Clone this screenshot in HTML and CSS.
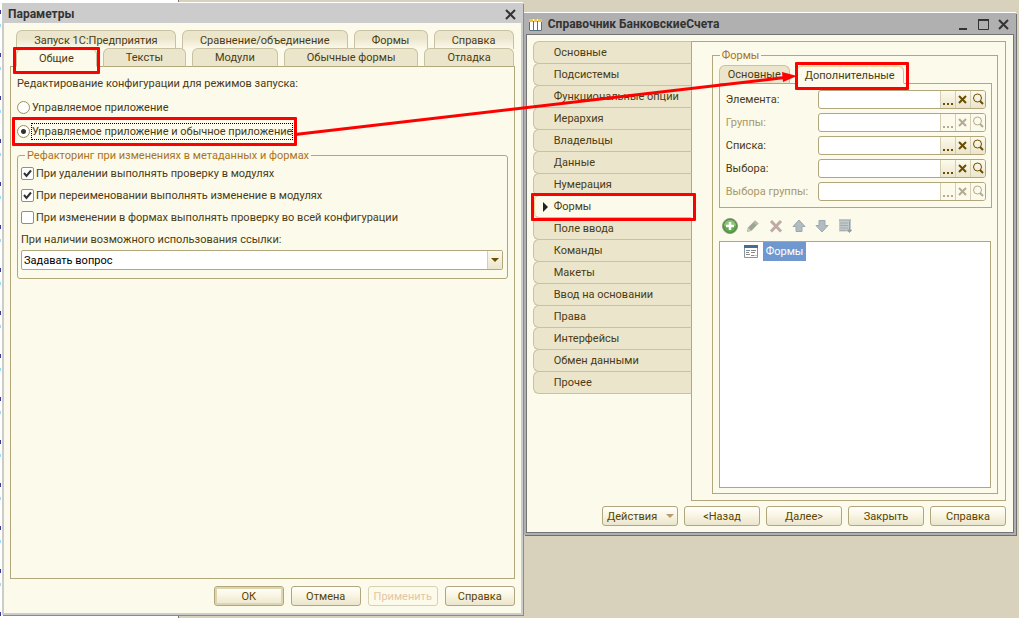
FILE: index.html
```html
<!DOCTYPE html>
<html lang="ru">
<head>
    <meta charset="UTF-8">
    <meta name="viewport" content="width=device-width, initial-scale=1.0">
    <title>Параметры</title>
    <link rel="stylesheet" href="styles.css">
</head>
<body>
    <div class="desktop">
        <div class="editor"></div>

        <section class="window window-params">
            <header class="titlebar">
                <h1>Параметры</h1>
                <button class="win-btn" type="button" aria-label="Закрыть">
                    <svg width="11" height="11" viewBox="0 0 11 11"><path d="M1 1l9 9M10 1l-9 9" stroke="#333" stroke-width="2"/></svg>
                </button>
            </header>
            <form class="window-body">
                <div class="tabs tabs-back" role="tablist">
                    <button type="button" role="tab">Запуск 1С:Предприятия</button>
                    <button type="button" role="tab">Сравнение/объединение</button>
                    <button type="button" role="tab">Формы</button>
                    <button type="button" role="tab">Справка</button>
                </div>
                <div class="tabs" role="tablist">
                    <button type="button" role="tab" class="active">Общие<span class="mark mark-tab"></span></button>
                    <button type="button" role="tab">Тексты</button>
                    <button type="button" role="tab">Модули</button>
                    <button type="button" role="tab">Обычные формы</button>
                    <button type="button" role="tab">Отладка</button>
                </div>
                <div class="panel params-panel">
                    <p>Редактирование конфигурации для режимов запуска:</p>
                    <label class="option"><input type="radio" name="mode"><span>Управляемое приложение</span></label>
                    <label class="option"><input type="radio" name="mode" checked><span class="focused">Управляемое приложение и обычное приложение</span><span class="mark mark-option"></span></label>
                    <fieldset class="refactoring">
                        <legend>Рефакторинг при изменениях в метаданных и формах</legend>
                        <label class="option"><input type="checkbox" checked><span>При удалении выполнять проверку в модулях</span></label>
                        <label class="option"><input type="checkbox" checked><span>При переименовании выполнять изменение в модулях</span></label>
                        <label class="option"><input type="checkbox"><span>При изменении в формах выполнять проверку во всей конфигурации</span></label>
                        <div class="combo-group">
                            <label for="links">При наличии возможного использования ссылки:</label>
                            <div class="combo">
                                <select id="links">
                                    <option>Задавать вопрос</option>
                                </select>
                                <span class="combo-arrow"></span>
                            </div>
                        </div>
                    </fieldset>
                </div>
                <footer class="buttons">
                    <button type="button" class="default">ОК</button>
                    <button type="button">Отмена</button>
                    <button type="button" disabled>Применить</button>
                    <button type="button">Справка</button>
                </footer>
            </form>
        </section>

        <section class="window window-catalog">
            <header class="titlebar">
                <svg width="13" height="12" viewBox="0 0 13 12">
                    <path fill="#fff" d="M0 0h13v12H0z"/>
                    <path fill="none" stroke="#55717f" d="M.5 2v9.500h12V2M4.500 2v9M8.500 2v9"/>
                    <path fill="#f0c63c" d="M0 0h4v3H0zM5 0h3v3H5zM9 0h4v3H9z"/>
                </svg>
                <h1>Справочник БанковскиеСчета</h1>
                <button class="win-btn" type="button" aria-label="Свернуть">
                    <svg width="11" height="11" viewBox="0 0 11 11"><path d="M1 10h8" stroke="#333" stroke-width="2"/></svg>
                </button>
                <button class="win-btn" type="button" aria-label="Развернуть">
                    <svg width="11" height="11" viewBox="0 0 11 11"><path d="M.5 1v9.500h10V1" fill="none" stroke="#333"/><path d="M0 1h11" stroke="#333" stroke-width="2"/></svg>
                </button>
                <button class="win-btn" type="button" aria-label="Закрыть">
                    <svg width="11" height="11" viewBox="0 0 11 11"><path d="M1 1l9 9M10 1l-9 9" stroke="#333" stroke-width="2"/></svg>
                </button>
            </header>
            <form class="window-body">
                <div class="catalog">
                    <nav class="side-tabs">
                        <button type="button">Основные</button>
                        <button type="button">Подсистемы</button>
                        <button type="button">Функциональные опции</button>
                        <button type="button">Иерархия</button>
                        <button type="button">Владельцы</button>
                        <button type="button">Данные</button>
                        <button type="button">Нумерация</button>
                        <button type="button" class="active">Формы<span class="mark mark-side"></span></button>
                        <button type="button">Поле ввода</button>
                        <button type="button">Команды</button>
                        <button type="button">Макеты</button>
                        <button type="button">Ввод на основании</button>
                        <button type="button">Права</button>
                        <button type="button">Интерфейсы</button>
                        <button type="button">Обмен данными</button>
                        <button type="button">Прочее</button>
                    </nav>
                    <div class="panel catalog-panel">
                        <fieldset class="forms">
                            <legend>Формы</legend>
                            <div class="tabs tabs-small" role="tablist">
                                <button type="button" role="tab">Основные</button>
                                <button type="button" role="tab" class="active">Дополнительные<span class="mark mark-extra"></span></button>
                            </div>
                            <div class="panel fields">
                                <div class="field">
                                    <label for="f-item">Элемента:</label>
                                    <div class="picker">
                                        <input type="text" id="f-item">
                                        <button type="button" aria-label="Выбрать"><svg width="14" height="17"><use href="#dots"/></svg></button>
                                        <button type="button" aria-label="Очистить"><svg width="14" height="17"><use href="#cross"/></svg></button>
                                        <button type="button" aria-label="Открыть"><svg width="14" height="17"><use href="#lens"/></svg></button>
                                    </div>
                                </div>
                                <div class="field off">
                                    <label for="f-group">Группы:</label>
                                    <div class="picker">
                                        <input type="text" id="f-group" disabled>
                                        <button type="button" disabled aria-label="Выбрать"><svg width="14" height="17"><use href="#dots"/></svg></button>
                                        <button type="button" disabled aria-label="Очистить"><svg width="14" height="17"><use href="#cross"/></svg></button>
                                        <button type="button" disabled aria-label="Открыть"><svg width="14" height="17"><use href="#lens"/></svg></button>
                                    </div>
                                </div>
                                <div class="field">
                                    <label for="f-list">Списка:</label>
                                    <div class="picker">
                                        <input type="text" id="f-list">
                                        <button type="button" aria-label="Выбрать"><svg width="14" height="17"><use href="#dots"/></svg></button>
                                        <button type="button" aria-label="Очистить"><svg width="14" height="17"><use href="#cross"/></svg></button>
                                        <button type="button" aria-label="Открыть"><svg width="14" height="17"><use href="#lens"/></svg></button>
                                    </div>
                                </div>
                                <div class="field">
                                    <label for="f-choice">Выбора:</label>
                                    <div class="picker">
                                        <input type="text" id="f-choice">
                                        <button type="button" aria-label="Выбрать"><svg width="14" height="17"><use href="#dots"/></svg></button>
                                        <button type="button" aria-label="Очистить"><svg width="14" height="17"><use href="#cross"/></svg></button>
                                        <button type="button" aria-label="Открыть"><svg width="14" height="17"><use href="#lens"/></svg></button>
                                    </div>
                                </div>
                                <div class="field off">
                                    <label for="f-choice-group">Выбора группы:</label>
                                    <div class="picker">
                                        <input type="text" id="f-choice-group" disabled>
                                        <button type="button" disabled aria-label="Выбрать"><svg width="14" height="17"><use href="#dots"/></svg></button>
                                        <button type="button" disabled aria-label="Очистить"><svg width="14" height="17"><use href="#cross"/></svg></button>
                                        <button type="button" disabled aria-label="Открыть"><svg width="14" height="17"><use href="#lens"/></svg></button>
                                    </div>
                                </div>
                            </div>
                            <div class="toolbar">
                                <button type="button" aria-label="Добавить">
                                    <svg width="16" height="16" viewBox="0 0 16 16">
                                        <circle cx="8" cy="8" r="7.500" fill="#4f8f3f" stroke="#8b9a80"/>
                                        <circle cx="8" cy="8" r="6" fill="#63a94c"/>
                                        <path d="M2 8a6 6 0 0 1 12 0z" fill="#8cc374"/>
                                        <path d="M8 4v8M4 8h8" stroke="#fff" stroke-width="2.500"/>
                                    </svg>
                                </button>
                                <button type="button" disabled aria-label="Изменить">
                                    <svg width="16" height="16" viewBox="0 0 16 16"><path d="M2 14l1-4.500L10 2.500l3.500 3L6.500 12.800z" fill="#9aa692"/><path d="M10 2.500l3.500 3-2 2-3.300-3.200z" fill="#b2bba9"/><path d="M2 14l1-4.500 3.500 3.300z" fill="#c4c8b4"/></svg>
                                </button>
                                <button type="button" disabled aria-label="Удалить">
                                    <svg width="16" height="16" viewBox="0 0 16 16"><path d="M3 3l10 10.500M13 3L3 13.500" stroke="#bfaaa4" stroke-width="3"/></svg>
                                </button>
                                <button type="button" disabled aria-label="Вверх">
                                    <svg width="16" height="16" viewBox="0 0 16 16"><path d="M8 2l6 6.500h-3V13.500H5V8.500H2z" fill="#b0bcc1" stroke="#9ba9af"/></svg>
                                </button>
                                <button type="button" disabled aria-label="Вниз">
                                    <svg width="16" height="16" viewBox="0 0 16 16"><path d="M8 14L2 7.500h3V2.500h6V7.500h3z" fill="#b0bcc1" stroke="#9ba9af"/></svg>
                                </button>
                                <button type="button" disabled aria-label="Порядок">
                                    <svg width="16" height="16" viewBox="0 0 16 16"><path d="M2 1.500h12v12H2z" fill="#c2c9ca"/><path d="M2 2h12M3 5h8M3 7.500h8M3 10h8M3 12.500h6" stroke="#a0abb0"/><path d="M12.500 3v10M10.500 12l2 2.500 2-2.500z" stroke="#93a0a6" fill="#93a0a6"/></svg>
                                </button>
                            </div>
                            <ul class="tree">
                                <li>
                                    <svg width="14" height="13" viewBox="0 0 14 13">
                                        <path d="M.5.5h13v12H.5z" fill="#fff" stroke="#8396a3"/>
                                        <path d="M0 0h14v3H0z" fill="#456e90"/>
                                        <path d="M2 5.500h4M2 7.500h3M2 9.500h4M7 5.500h5M7 7.500h4M7 10.500h3" stroke="#8a8a8a"/>
                                        <path d="M10 10.500h3" stroke="#c9c9c9"/>
                                    </svg>
                                    <span>Формы</span>
                                </li>
                            </ul>
                        </fieldset>
                    </div>
                </div>
                <footer class="buttons buttons-wide">
                    <button type="button" class="menu">Действия</button>
                    <button type="button">&lt;Назад</button>
                    <button type="button">Далее&gt;</button>
                    <button type="button">Закрыть</button>
                    <button type="button">Справка</button>
                </footer>
            </form>
        </section>

        <svg class="arrow" viewBox="0 0 1019 618" preserveAspectRatio="none">
            <path d="M295 134.500L785 77.500" stroke="#f00" stroke-width="3"/>
            <path d="M782 72l15 4-14 6z" fill="#f00"/>
        </svg>
    </div>

    <svg width="0" height="0" class="symbols">
        <symbol id="dots" viewBox="0 0 14 17"><path d="M2 12h2v2H2zM6 12h2v2H6zM10 12h2v2h-2z" fill="currentColor"/></symbol>
        <symbol id="cross" viewBox="0 0 14 17"><path d="M3 5l7 7M10 5l-7 7" stroke="currentColor" stroke-width="2"/></symbol>
        <symbol id="lens" viewBox="0 0 14 17"><circle cx="6.500" cy="7" r="4" fill="none" stroke="currentColor"/><path d="M9 10l3 3" stroke="currentColor" stroke-width="2"/></symbol>
    </svg>
</body>
</html>
```
FILE: styles.css
```css
* {
    box-sizing: border-box;
}
body {
    margin: 0;
    font-family: Roboto, "Liberation Sans", sans-serif;
    font-size: 11px;
    line-height: 15px;
    color: #4a3c14;
}
button, input, select {
    font: inherit;
    color: inherit;
    margin: 0;
}
button {
    padding: 0;
    border: none;
    background: none;
    white-space: nowrap;
}
p, h1, ul {
    margin: 0;
    padding: 0;
}
svg {
    display: block;
}
.symbols {
    position: absolute;
}
.desktop {
    position: relative;
    height: 100vh;
    overflow: hidden;
    background-color: #d8d2bd;
}

/* edge of the code editor behind the windows */
.editor {
    width: 179px;
    height: 100%;
    border-right: 1px solid #777;
    background: repeating-linear-gradient(#fff 0 10px, #3c3c96 10px 14px, #fff 14px 24px, #9cdcf4 24px 27px, #fff 27px 43px) left / 1px 100% no-repeat, #fff;
}

/* windows */
.window {
    position: absolute;
    display: flex;
    flex-direction: column;
}
.window-params {
    left: 2px;
    top: 3px;
    bottom: 3px;
    width: 51.1%;
    border: 2px solid #ccc;
    background-color: #ccc;
    box-shadow: 1px 1px 0 #8a8a8a, 0 -1px 0 #fff;
}
.window-catalog {
    left: 51.4%;
    right: 3px;
    top: 13px;
    bottom: 83px;
    border: 2px solid #b0b0b0;
    background-color: #b0b0b0;
    box-shadow: 1px 1px 0 #6f6f6f, 0 -1px 0 #fff;
}
.titlebar {
    display: flex;
    align-items: center;
    gap: 8px;
    height: 18px;
    padding: 0 4px;
    color: #333;
}
.window-catalog .titlebar {
    height: 19px;
    padding: 0 4px 0 3px;
}
.titlebar h1 {
    flex: 1;
    font-size: 12px;
    font-weight: bold;
}
.titlebar > svg {
    margin-right: -2px;
}
.win-btn {
    padding: 0 1px 0 0;
}
.window-body {
    flex: 1;
    display: flex;
    flex-direction: column;
    min-height: 0;
    padding: 7px 6px;
    background-color: #fcfaeb;
}
.window-catalog .window-body {
    padding: 6px 7px 6px 6px;
    border: 1px solid #747474;
}

/* tabs */
.tabs {
    position: relative;
    display: flex;
    gap: 6px;
    padding: 0 1px 0 6px;
    margin-bottom: -1px;
}
.tabs button {
    position: relative;
    flex: 1 1 auto;
    height: 19px;
    border: 1px solid #b9b08c;
    border-color: #c9c2a2 #c9c2a2 #b1a67c;
    border-radius: 6px 6px 0 0;
    background-color: #ebe5cc;
}
.tabs-back button {
    border-bottom: none;
    background: linear-gradient(#ebe5cc 40%, #fcfaeb);
}
.tabs .active {
    border-top: 2px solid #f3d9a0;
    border-bottom-color: #fcfaeb;
    background-color: #fcfaeb;
}
.tabs-small {
    padding-left: 0;
}
.tabs-small button {
    flex: none;
    padding: 0 8px;
}
.panel {
    border: 1px solid #b1a67c;
}

/* red frames */
.mark {
    position: absolute;
    border: 3px solid #f00;
    border-radius: 1px;
    z-index: 2;
    pointer-events: none;
}
.mark-tab {
    inset: -3px -4px -8px;
}
.mark-option {
    inset: -7px -5px;
}
.mark-side {
    inset: -3px -5px -4px -4px;
}
.mark-extra {
    inset: -5px -6px -7px -2px;
}

/* parameters */
.params-panel {
    flex: 1;
    display: flex;
    flex-direction: column;
    gap: 9px;
    padding: 9px 6px;
}
.option {
    position: relative;
    display: flex;
    align-items: center;
    align-self: flex-start;
    gap: 2px;
    height: 15px;
}
.option input {
    appearance: none;
    width: 13px;
    height: 13px;
    border: 1px solid #9a9060;
    border-radius: 2px;
    background: #fff center no-repeat;
}
.option input[type="radio"] {
    border-radius: 50%;
}
.option input[type="radio"]:checked {
    background-image: radial-gradient(circle, #333 2px, transparent 3px);
}
.option input[type="checkbox"]:checked {
    background-image: url("data:image/svg+xml,%3Csvg xmlns='http://www.w3.org/2000/svg' width='11' height='11'%3E%3Cpath d='M2 5l2.500 3L9 2.500' fill='none' stroke='%23333' stroke-width='2'/%3E%3C/svg%3E");
}
.focused {
    outline: 1px dotted #000;
}
fieldset {
    min-width: 0;
    margin: 0;
    padding: 3px 4px 8px 3px;
    border: 1px solid #b1a67c;
    border-radius: 3px;
}
legend {
    padding: 0 2px;
    margin-left: 4px;
    color: #ab741a;
}
.refactoring {
    display: flex;
    flex-direction: column;
    gap: 7px;
}
.combo-group {
    display: flex;
    flex-direction: column;
    gap: 3px;
}
.combo {
    display: flex;
    height: 20px;
    border: 1px solid #b1a67c;
    border-radius: 2px;
    background-color: #fff;
    color: #000;
}
.combo select {
    appearance: none;
    flex: 1;
    padding: 0 2px;
    border: none;
    background: none;
}
.combo-arrow {
    width: 15px;
    border-left: 1px solid #d5cfb2;
    background: url("data:image/svg+xml,%3Csvg xmlns='http://www.w3.org/2000/svg' width='8' height='4'%3E%3Cpath d='M0 0h8L4 4z' fill='%236b4e00'/%3E%3C/svg%3E") center no-repeat, linear-gradient(#fcfaeb, #ebe5cc);
}

/* bottom buttons */
.buttons {
    display: flex;
    justify-content: flex-end;
    gap: 7px;
    padding-top: 7px;
}
.buttons button {
    width: 70px;
    height: 20px;
    border: 1px solid #b1a67c;
    border-radius: 3px;
    background: linear-gradient(#fff, #faf7e6 40%, #ebe5cc);
    color: #5a4300;
}
.buttons .default {
    box-shadow: inset 0 0 0 2px #ddd5b0;
}
.buttons button:disabled {
    border-color: #d8d2b4;
    background: #fcfaeb;
    color: #e3c6a4;
}
.buttons-wide {
    gap: 6px;
    padding-top: 5px;
}
.buttons-wide button {
    width: 76px;
}
.buttons .menu {
    display: flex;
    align-items: center;
    justify-content: space-between;
    padding: 0 3px 0 4px;
}
.menu::after {
    content: "";
    border: 4px solid transparent;
    border-top-color: #b99a70;
    border-bottom: none;
}

/* catalog */
.catalog {
    flex: 1;
    display: flex;
    min-height: 0;
}
.side-tabs {
    flex: none;
    display: flex;
    flex-direction: column;
    width: 159px;
    margin-right: -1px;
    z-index: 1;
}
.side-tabs button {
    position: relative;
    height: 23px;
    margin-bottom: -1px;
    padding-left: 20px;
    border: 1px solid #c9c2a2;
    border-right-color: #b1a67c;
    border-radius: 6px 0 0 6px;
    background-color: #ebe5cc;
    text-align: left;
}
.side-tabs .active {
    border-left: 2px solid #f3d9a0;
    border-right-color: #fcfaeb;
    background-color: #fcfaeb;
    padding-left: 19px;
    z-index: 1;
}
.side-tabs .active::before {
    content: "";
    position: absolute;
    left: 8px;
    top: 6px;
    border: 5px solid transparent;
    border-left-color: #222;
    border-right: none;
}
.catalog-panel {
    flex: 1;
    display: flex;
    min-width: 0;
    padding: 6px 7px 6px 20px;
}
.forms {
    flex: 1;
    display: flex;
    flex-direction: column;
    padding: 2px 5px 5px 6px;
    border-radius: 0;
}
.forms legend {
    margin-left: 1px;
}
.fields {
    display: flex;
    flex-direction: column;
    gap: 4px;
    padding: 6px 5px 6px 6px;
}
.field {
    display: flex;
    align-items: center;
}
.field label {
    width: 92px;
}
.off label {
    color: #a89868;
}
.picker {
    flex: 1;
    display: flex;
    height: 19px;
    min-width: 0;
    border: 1px solid #b1a67c;
    border-radius: 3px;
    background-color: #fff;
    overflow: hidden;
}
.picker input {
    flex: 1;
    min-width: 0;
    padding: 0 2px;
    border: none;
    background: none;
}
.picker button {
    border-left: 1px solid #d5cfb2;
    background: linear-gradient(#fcfaeb, #ebe5cc);
    color: #6b4e00;
}
.picker button:disabled {
    background: #fcfaeb;
    color: #b3aa92;
}
.toolbar {
    display: flex;
    gap: 7px;
    padding: 10px 3px 7px;
}
.tree {
    flex: 1;
    margin-right: 1px;
    border: 1px solid #b1a67c;
    background-color: #fff;
    list-style: none;
}
.tree li {
    display: flex;
    align-items: center;
    gap: 5px;
    padding-left: 24px;
}
.tree span {
    padding: 2px 3px;
    background-color: #6f98d0;
    color: #fff;
}

/* arrow between the frames */
.arrow {
    position: absolute;
    left: 0;
    top: 0;
    width: 100%;
    height: 100%;
    z-index: 3;
    pointer-events: none;
}
```
